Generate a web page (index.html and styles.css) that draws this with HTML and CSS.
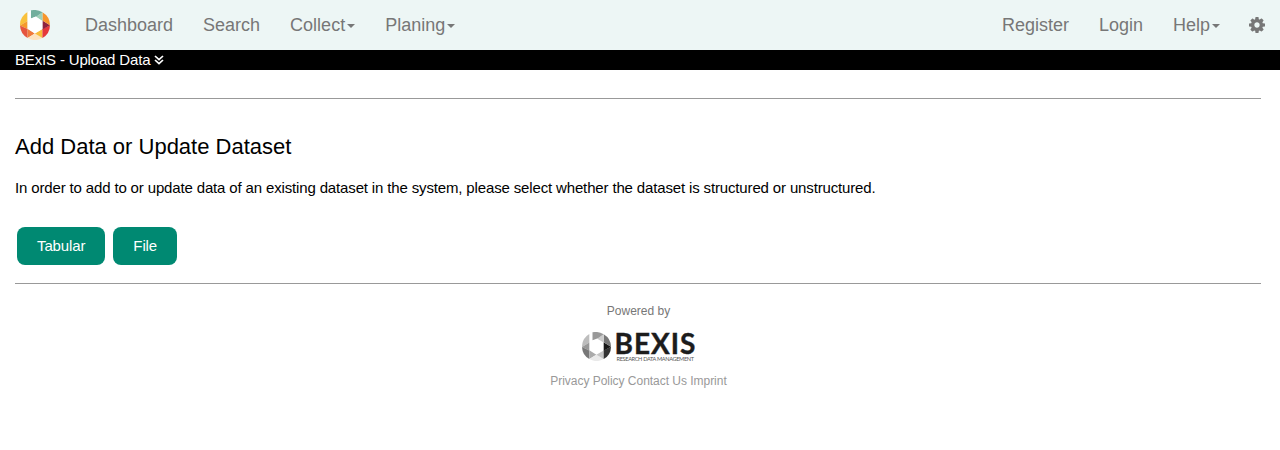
FILE: index.html
```html
<!DOCTYPE html>
<html lang="en">
<head>
<meta charset="utf-8">
<title>BExIS - Upload Data</title>
<link rel="stylesheet" href="styles.css">
</head>
<body>
<nav class="navbar">
  <a class="brand" href="#"><svg class="logo" viewBox="30 29 91 91">
    <path fill="#f9c13c" d="M30 76A46 46 0 0 1 53 35V62Z"/>
    <path fill="#f59a2c" d="M30 76L53 62V87Z"/>
    <path fill="#e5553f" d="M30 76L53 87V114A46 46 0 0 1 30 76Z"/>
    <path fill="#f07a3c" d="M53 86L75 100L53 114Z"/>
    <path fill="#fde3c0" d="M53 114L75 100L98 114A46 46 0 0 1 53 114Z"/>
    <path fill="#f9bd3a" d="M75 100L98 87V114Z"/>
    <path fill="#e5383b" d="M98 87L121 75A46 46 0 0 1 98 114Z"/>
    <path fill="#8e2340" d="M98 61L121 75L98 88Z"/>
    <path fill="#f7952b" d="M98 36A46 46 0 0 1 121 75L98 61Z"/>
    <path fill="#9fd0b8" d="M98 36V62L78 50Z"/>
    <path fill="#71ae9c" d="M63 30Q82 26 98 36L80 49L63 55Z"/>
    <path fill="#fff" d="M53 35L63 30V55L78 49L98 62V87L75 100L53 86Z"/>
  </svg></a>
  <a href="#">Dashboard</a>
  <a href="#">Search</a>
  <a href="#">Collect<i class="caret"></i></a>
  <a href="#">Planing<i class="caret"></i></a>
  <div class="nav-right">
    <a href="#">Register</a>
    <a href="#">Login</a>
    <a href="#">Help<i class="caret"></i></a>
    <a href="#"><svg class="cog" viewBox="0 128 1536 1536"><path d="M1024 896q0-106-75-181t-181-75-181 75-75 181 75 181 181 75 181-75 75-181zm512-109v222q0 12-8 23t-20 13l-185 28q-19 54-39 91 35 50 107 138 10 12 10 25t-9 23q-27 37-99 108t-94 71q-12 0-26-9l-138-108q-44 23-91 38-16 136-29 186-7 28-36 28h-222q-14 0-24.500-8.500t-11.500-21.500l-28-184q-49-16-90-37l-141 107q-10 9-25 9-14 0-25-11-126-114-165-168-7-10-7-23 0-12 8-23 15-21 51-66.500t54-70.500q-27-50-41-99l-183-27q-13-2-21-12.500t-8-23.500v-222q0-12 8-23t19-13l186-28q14-46 39-92-40-57-107-138-10-12-10-24 0-10 9-23 26-36 98.500-107.500t94.500-71.500q13 0 26 10l138 107q44-23 91-38 16-136 29-186 7-28 36-28h222q14 0 24.500 8.500t11.500 21.500l28 184q49 16 90 37l142-107q9-9 24-9 13 0 25 10 129 119 165 170 7 8 7 22 0 12-8 23-15 21-51 66.500t-54 70.500q26 50 41 98l183 28q13 2 21 12.500t8 23.500z"/></svg></a>
  </div>
</nav>
<div class="titlebar">BExIS - Upload Data <svg class="chevrons" viewBox="0 0 10 10"><path d="M1 1L5 4.700L9 1M1 5L5 8.700L9 5"/></svg></div>
<main class="content">
  <hr>
  <h2>Add Data or Update Dataset</h2>
  <p>In order to add to or update data of an existing dataset in the system, please select whether the dataset is structured or unstructured.</p>
  <div class="actions"><button>Tabular</button><button>File</button></div>
  <hr>
</main>
<footer class="footer">
  <div class="powered">Powered by</div>
  <div class="bexis">
    <svg class="mark" viewBox="30 29 91 91">
      <path fill="#bdbdbd" d="M30 76A46 46 0 0 1 53 35V62Z"/>
      <path fill="#999" d="M30 76L53 62V87Z"/>
      <path fill="#777" d="M30 76L53 87V114A46 46 0 0 1 30 76Z"/>
      <path fill="#aaa" d="M53 86L75 100L53 114Z"/>
      <path fill="#e9e9e9" d="M53 114L75 100L98 114A46 46 0 0 1 53 114Z"/>
      <path fill="#c4c4c4" d="M75 100L98 87V114Z"/>
      <path fill="#333" d="M98 87L121 75A46 46 0 0 1 98 114Z"/>
      <path fill="#171717" d="M98 61L121 75L98 88Z"/>
      <path fill="#777" d="M98 36A46 46 0 0 1 121 75L98 61Z"/>
      <path fill="#ccc" d="M98 36V62L78 50Z"/>
      <path fill="#999" d="M63 30Q82 26 98 36L80 49L63 55Z"/>
    </svg>
    <div class="lettering">
      <div class="wordmark">BEXIS</div>
      <div class="tagline">RESEARCH DATA MANAGEMENT</div>
    </div>
  </div>
  <div class="links"><a href="#">Privacy Policy</a> <a href="#">Contact Us</a> <a href="#">Imprint</a></div>
</footer>
</body>
</html>
```
FILE: styles.css
```css
* { box-sizing: border-box; }
body { margin: 0; background: #fff; color: #000; font: 15px/20px "Liberation Sans", Arial, sans-serif; }
a { color: inherit; text-decoration: none; }
.navbar { display: flex; height: 50px; background: #edf6f5; color: #777; font-size: 18px; line-height: 20px; }
.navbar a { display: flex; align-items: center; padding: 0 15px; }
.navbar .brand { padding: 0 20px; width: 70px; }
.logo { width: 30px; height: 30px; flex: none; }
.nav-right { display: flex; margin-left: auto; }
.caret { border: 4px solid transparent; border-top-color: #777; border-bottom: 0; margin: 2px 0 0 2px; }
.nav-right .caret { margin-right: -1px; }
.cog { width: 16px; height: 16px; fill: #777; }
.titlebar { height: 20px; padding-left: 15px; background: #000; color: #fff; letter-spacing: -0.160px; }
.chevrons { width: 10px; height: 10px; fill: none; stroke: #fff; stroke-width: 1.700; }
.content { padding: 28px 19px 0 15px; }
hr { height: 1px; margin: 0; border: 0; background: #999; }
h2 { margin: 34px 0 0; font-size: 22px; line-height: 27px; font-weight: 400; }
p { margin: 18px 0 0; letter-spacing: -0.147px; }
.actions { display: flex; gap: 8px; padding: 29px 2px 18px; }
button { height: 38px; padding: 0 20px; border: 0; border-radius: 8px; background: #008972; color: #fff; font: inherit; letter-spacing: -0.120px; }
.footer { display: flex; flex-direction: column; align-items: center; width: 1277px; padding-top: 17px; font-size: 12px; color: #777; }
.bexis { display: flex; width: 114px; height: 32px; margin: 9px 0; }
.mark { flex: none; width: 29px; height: 29px; margin-top: 2px; }
.lettering { padding-left: 4px; white-space: nowrap; }
.wordmark { height: 25px; font: 700 28px/26px Lato, sans-serif; letter-spacing: 1px; color: #1c1c1c; -webkit-text-stroke: 0.400px #1c1c1c; }
.tagline { margin-left: 2px; font: 5.600px/7px Lato, sans-serif; letter-spacing: -0.340px; color: #555; }
.links { color: #999; letter-spacing: -0.030px; }
```
